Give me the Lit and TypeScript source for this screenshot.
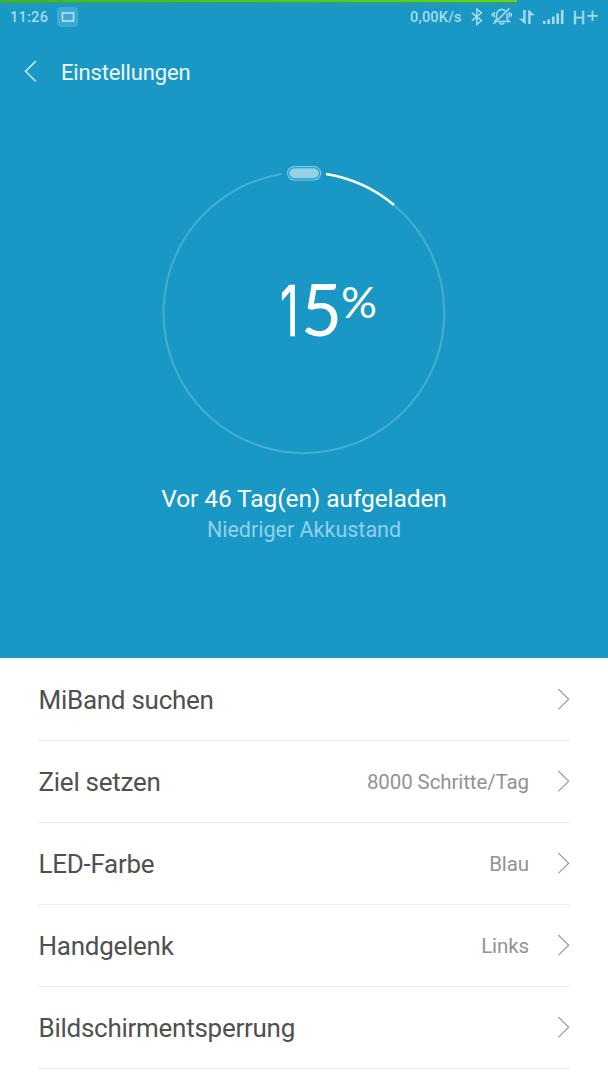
import { LitElement, html, css, svg, nothing } from "lit";
import { customElement, property } from "lit/decorators.js";

@customElement("status-bar")
class StatusBar extends LitElement {
  static styles = css`
    :host { display: block; height: 34px; color: #a9dbee; font: 500 14px Roboto, sans-serif; }
    .progress { height: 2px; width: 517px; background: linear-gradient(90deg, #43b51d, #63d516); }
    .shade { height: 6px; width: 517px; background: linear-gradient(#2a9c9c, #1998c600); margin-bottom: -5px; }
    .bar { display: flex; height: 31px; }
    .time { width: 47px; padding: 5px 0 0 10px; line-height: 20px; letter-spacing: 0.27px; font-size: 14.5px; }
    .badge { width: 21px; height: 20px; margin-top: 4px; }
    .rate { margin-left: auto; padding-top: 5px; line-height: 20px; width: 54px; letter-spacing: 0.2px; font-size: 14.5px; white-space: nowrap; }
    .icons { width: 144px; height: 31px; }
    svg { display: block; }
  `;
  render() {
    return html`
      <div class="progress"></div>
      <div class="shade"></div>
      <div class="bar">
        <span class="time">11:26</span>
        <svg class="badge" viewBox="0 0 21 20">
          <rect width="21" height="20" rx="4" fill="#3caad2" />
          <rect x="5.5" y="6" width="11" height="8" fill="none" stroke="#c2e8f6" stroke-width="1.4" />
        </svg>
        <span class="rate">0,00K/s</span>
        <svg class="icons" viewBox="464 3 144 31" fill="none" stroke="#a9dbee">
          <path d="M472 12.8 L481.5 20.6 L476.8 24.5 V9 L481.5 12.8 L472 20.6" stroke-width="1.5" />
          <g stroke-width="1.5">
            <path d="M494.3 21.6 L496.6 19.3 V14.6 Q497 9.8 501.8 9.2 Q504.2 9.4 505.6 11.2 M507.2 13.6 V19.2 L509.3 21.6 H497.6 M499.4 23.2 Q501.8 25 504.4 23.2" />
            <path d="M493.6 24 L509.4 8.4" />
            <path d="M494.8 12 Q493.3 14.8 494.8 17.6 M492.6 13 Q491.9 14.8 492.6 16.6 M508.8 12 Q510.3 14.8 508.8 17.6 M511 13 Q511.7 14.8 511 16.6" />
          </g>
          <path fill="#a9dbee" stroke="none" d="M523.2 10 H525.6 V24.3 L519 18.7 H523.2 Z M528.2 9.5 L534.8 15.2 H530.6 V24 H528.2 Z" />
          <path fill="#a9dbee" stroke="none" d="M543 21h2.6v3H543z M547.4 19.2h2.6v4.8h-2.6z M551.9 16.5h2.6v7.5h-2.6z M556.4 13.5h2.6V24h-2.6z M560.9 10h2.6v14h-2.6z" />
          <text x="572.6" y="23.6" fill="#a9dbee" stroke="#a9dbee" stroke-width="0.3" font-family="Roboto, sans-serif" font-weight="400" font-size="18">H</text>
          <path d="M587.3 15.8h10.4M592.5 10.6V21" stroke-width="1.7" />
        </svg>
      </div>`;
  }
}

@customElement("battery-ring")
class BatteryRing extends LitElement {
  @property({ type: Number }) level = 0;
  static styles = css`
    :host { display: block; width: 300px; height: 300px; font-family: Lato, sans-serif; }
    svg { display: block; }
    .one { font-family: Inter, sans-serif; font-weight: 400; font-size: 70px; }
  `;
  render() {
    const [tens, units] = String(this.level);
    return svg`<svg width="300" height="300" viewBox="154 162 300 300">
      <path d="M394 205 A140.4 140.4 0 1 1 282 174" fill="none" stroke="#47add2" stroke-width="2" />
      <path d="M326 174 A140.4 140.4 0 0 1 394 205" fill="none" stroke="#fff" stroke-width="2.4" />
      <rect x="287.6" y="166.6" width="33" height="13.4" rx="6.7" fill="none" stroke="#83c9e2" stroke-width="1.2" />
      <rect x="289.4" y="168.3" width="29.4" height="10" rx="5" fill="#93d1e7" />
      <g fill="#fff">
        <text class="one" transform="translate(280 335.5) scale(.66 1)" stroke="#fff" stroke-width="0.6">${tens}</text>
        <text x="301" y="335.5" font-size="71">${units}</text>
        <text x="341" y="318" font-size="43" textLength="36" lengthAdjust="spacingAndGlyphs">%</text>
      </g>
    </svg>`;
  }
}

@customElement("setting-row")
class SettingRow extends LitElement {
  @property() label = "";
  @property() value = "";
  static styles = css`
    :host { display: flex; box-sizing: border-box; height: 82px; margin: 0 38px; align-items: center; border-bottom: 1px solid #ededed; font-family: Roboto, sans-serif; }
    .label { flex: 1; color: #505050; font-size: 26px; line-height: 32px; letter-spacing: -0.27px; padding: 1px 0 0 0.5px; white-space: nowrap; }
    .value { color: #929292; font-size: 20.5px; line-height: 28px; letter-spacing: -0.1px; padding-top: 1px; margin-right: 28px; white-space: nowrap; }
    .chevron { width: 13px; height: 24px; margin-top: -2px; }
  `;
  render() {
    return html`<span class="label">${this.label}</span>
      ${this.value ? html`<span class="value">${this.value}</span>` : nothing}
      <svg class="chevron" viewBox="0 0 13 24"><path d="M1.3 2 L11.7 12.2 L1.3 22.4" fill="none" stroke="#a2a2a2" stroke-width="1.3" /></svg>`;
  }
}

@customElement("app-root")
class AppRoot extends LitElement {
  static styles = css`
    :host { display: block; height: 1080px; overflow: hidden; background: #fff; font-family: Roboto, sans-serif; }
    .hero { height: 658px; background: #1998c6; color: #fff; display: flex; flex-direction: column; }
    .header { display: flex; align-items: center; height: 76px; padding-left: 23px; }
    .back { width: 15px; height: 24px; margin-right: 23px; }
    .title { font-size: 22px; line-height: 30px; letter-spacing: -0.15px; padding-top: 2px; color: #eef9fd; }
    .ring { align-self: center; margin-top: 52px; }
    .charged { text-align: center; font-size: 24.5px; line-height: 32px; letter-spacing: -0.09px; margin-top: 21px; }
    .state { text-align: center; font-size: 21.5px; line-height: 28px; color: #93d1e8; margin-top: 1px; }
    .list { padding-top: 1px; }
  `;
  private rows = [
    ["MiBand suchen", ""],
    ["Ziel setzen", "8000 Schritte/Tag"],
    ["LED-Farbe", "Blau"],
    ["Handgelenk", "Links"],
    ["Bildschirmentsperrung", ""],
  ];
  render() {
    return html`
      <section class="hero">
        <status-bar></status-bar>
        <div class="header">
          <svg class="back" viewBox="0 0 15 24"><path d="M12.8 1.2 L2.6 11.3 L12.8 21.4" fill="none" stroke="#b5e0f0" stroke-width="1.8" /></svg>
          <span class="title">Einstellungen</span>
        </div>
        <battery-ring class="ring" .level=${15}></battery-ring>
        <div class="charged">Vor 46 Tag(en) aufgeladen</div>
        <div class="state">Niedriger Akkustand</div>
      </section>
      <div class="list">
        ${this.rows.map(([l, v]) => html`<setting-row .label=${l} .value=${v}></setting-row>`)}
      </div>`;
  }
}
